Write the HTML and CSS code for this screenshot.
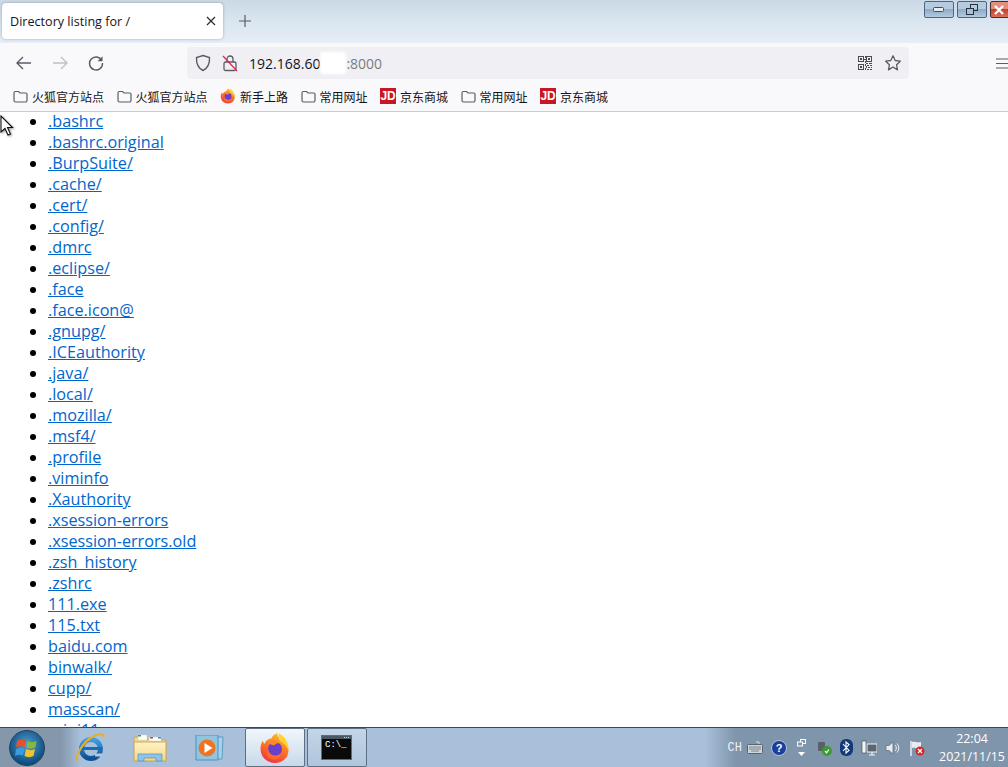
FILE: index.html
```html
<!DOCTYPE html>
<html>
<head>
    <title>Directory listing for /</title>
    <link rel="stylesheet" href="styles.css">
</head>
<body>
    <div class="browser">
        <div class="titlebar">
            <div class="tab">
                <span class="tab-title">Directory listing for /</span>
                <svg class="tab-close" width="10" height="10" viewBox="0 0 10 10"><path d="M1 1l8 8M9 1l-8 8" stroke="#2b2a33" stroke-width="1.2"/></svg>
            </div>
            <svg class="new-tab" width="14" height="14" viewBox="0 0 14 14"><path d="M7 1v12M1 7h12" stroke="#5b5b66" stroke-width="1.2"/></svg>
            <div class="win-controls">
                <div class="win-btn">
                    <svg width="12" height="6" viewBox="0 0 12 6"><rect x=".5" y=".5" width="10" height="4" rx="1" fill="#e8edf2" stroke="#3f4f63"/></svg>
                </div>
                <div class="win-btn">
                    <svg width="14" height="12" viewBox="0 0 14 12"><rect x="5.5" y=".5" width="7" height="6" fill="none" stroke="#25313f"/><rect x="1.5" y="4.5" width="7" height="6" fill="#a9c0d8" stroke="#25313f"/></svg>
                </div>
                <div class="win-btn win-close">
                    <svg class="close-x" width="12" height="10" viewBox="0 0 12 10"><path d="M2 1l8 8M10 1l-8 8" stroke="#fff" stroke-width="2.4"/></svg>
                </div>
            </div>
        </div>

        <div class="toolbar">
            <svg class="nav-icon" width="18" height="18" viewBox="0 0 18 18"><path d="M16 9H2M8 3L2 9l6 6" fill="none" stroke="#5b5b66" stroke-width="1.4"/></svg>
            <svg class="nav-icon" width="18" height="18" viewBox="0 0 18 18"><path d="M2 9h14M10 3l6 6-6 6" fill="none" stroke="#c0c0c6" stroke-width="1.4"/></svg>
            <svg class="nav-icon" width="18" height="18" viewBox="0 0 18 18"><path d="M14.8 6.5A6.5 6.5 0 1 0 15.5 9" fill="none" stroke="#5b5b66" stroke-width="1.4"/><path d="M15.5 2.2v5h-5z" fill="#5b5b66"/></svg>
            <div class="urlbar">
                <svg width="16" height="18" viewBox="0 0 16 18"><path d="M8 1.5l6.5 2c.3 6-1.5 10.500-6.500 13-5-2.500-6.800-7-6.500-13z" fill="none" stroke="#5b5b66" stroke-width="1.4"/></svg>
                <svg class="lock" width="16" height="18" viewBox="0 0 16 18"><rect x="2" y="8" width="12" height="8.5" rx="1.5" fill="none" stroke="#5b5b66" stroke-width="1.3"/><path d="M5 8V5a3 3 0 0 1 6 0v3" fill="none" stroke="#5b5b66" stroke-width="1.3"/><path d="M1 2l14 15" stroke="#e22850" stroke-width="1.3"/></svg>
                <span class="url"><span class="host">192.168.60</span><span class="blot"></span><span class="port">:8000</span></span>
                <svg class="qr" width="14" height="14" viewBox="0 0 14 14"><path fill="#4a4a55" d="M0 0h6v6H0zM1 1v4h4V1zM2 2h2v2H2zM8 0h6v6H8zM9 1v4h4V1zM10 2h2v2h-2zM0 8h6v6H0zM1 9v4h4V9zM2 10h2v2H2zM7 0h1v2H7zM6 3h2v1H6zM7 5h1v2H7zM8 7h2v1H8zM11 7h3v1h-3zM7 8h1v2H7zM9 9h2v1H9zM12 9h2v1h-2zM8 10h1v2H8zM10 11h2v1h-2zM13 11h1v1h-1zM7 12h1v2H7zM9 13h2v1H9zM12 13h2v1h-2z" fill-rule="evenodd"/></svg>
                <svg class="star" width="18" height="18" viewBox="0 0 18 18"><path d="M9 1.800l2.200 4.700 5.100.7-3.700 3.600.9 5.100L9 13l-4.500 2.900.9-5.100L1.700 7.200l5.100-.7z" fill="none" stroke="#5b5b66" stroke-width="1.3" stroke-linejoin="round"/></svg>
            </div>
            <svg class="menu" width="14" height="11" viewBox="0 0 14 11"><path d="M0 1h14M0 5.500h14M0 10h14" stroke="#5b5b66" stroke-width="1.1"/></svg>
        </div>

        <div class="bookmarks">
            <div class="bookmark"><svg width="15" height="13" viewBox="0 0 15 13"><use href="#folder"/></svg>火狐官方站点</div>
            <div class="bookmark"><svg width="15" height="13" viewBox="0 0 15 13"><use href="#folder"/></svg>火狐官方站点</div>
            <div class="bookmark"><svg width="16" height="16" viewBox="0 0 32 32"><use href="#firefox"/></svg>新手上路</div>
            <div class="bookmark"><svg width="15" height="13" viewBox="0 0 15 13"><use href="#folder"/></svg>常用网址</div>
            <div class="bookmark"><span class="jd">JD</span>京东商城</div>
            <div class="bookmark"><svg width="15" height="13" viewBox="0 0 15 13"><use href="#folder"/></svg>常用网址</div>
            <div class="bookmark"><span class="jd">JD</span>京东商城</div>
        </div>

        <div class="content">
            <svg class="cursor" width="14" height="22" viewBox="0 0 14 22"><path d="M1 1v16l4-3.500 3 6.500 2.500-1-3-6.500H12.500z" fill="#fff" stroke="#111" stroke-width="1.1"/></svg>
            <ul class="listing">
                <li><a href="#">.bashrc</a></li>
                <li><a href="#">.bashrc.original</a></li>
                <li><a href="#">.BurpSuite/</a></li>
                <li><a href="#">.cache/</a></li>
                <li><a href="#">.cert/</a></li>
                <li><a href="#">.config/</a></li>
                <li><a href="#">.dmrc</a></li>
                <li><a href="#">.eclipse/</a></li>
                <li><a href="#">.face</a></li>
                <li><a href="#">.face.icon@</a></li>
                <li><a href="#">.gnupg/</a></li>
                <li><a href="#">.ICEauthority</a></li>
                <li><a href="#">.java/</a></li>
                <li><a href="#">.local/</a></li>
                <li><a href="#">.mozilla/</a></li>
                <li><a href="#">.msf4/</a></li>
                <li><a href="#">.profile</a></li>
                <li><a href="#">.viminfo</a></li>
                <li><a href="#">.Xauthority</a></li>
                <li><a href="#">.xsession-errors</a></li>
                <li><a href="#">.xsession-errors.old</a></li>
                <li><a href="#">.zsh_history</a></li>
                <li><a href="#">.zshrc</a></li>
                <li><a href="#">111.exe</a></li>
                <li><a href="#">115.txt</a></li>
                <li><a href="#">baidu.com</a></li>
                <li><a href="#">binwalk/</a></li>
                <li><a href="#">cupp/</a></li>
                <li><a href="#">masscan/</a></li>
                <li><a href="#">mini11</a></li>
            </ul>
        </div>

        <div class="taskbar">
            <div class="start-orb">
                <svg width="24" height="22" viewBox="0 0 24 22"><path d="M2 4c3.500-2 6-2 9-.5L9.500 10C6.500 8.800 4 9 1 10.500z" fill="#e8502a"/><path d="M12.500 4c3 1.500 5.500 1.500 9 0L20.500 10.500c-3 1.500-6 1.500-9 0z" fill="#86b83c"/><path d="M1 12c3-1.500 5.500-1.700 8.500-.5L8 18.500c-3-1.200-5.500-1-8 .5z" fill="#3a9be0"/><path d="M11 12c3 1.500 6 1.500 9 0L18.500 19c-3 1.500-6 1.500-9 0z" fill="#f5c22e"/></svg>
            </div>
            <div class="task-item">
                <svg width="32" height="32" viewBox="0 0 32 32"><defs><linearGradient id="ieBlue" x1="0" y1="0" x2="0" y2="1"><stop offset="0" stop-color="#3f9fe0"/><stop offset="1" stop-color="#0e4f96"/></linearGradient></defs><circle cx="17" cy="17" r="9.500" fill="none" stroke="url(#ieBlue)" stroke-width="5"/><path d="M8 16.500h20" stroke="#1a6cb8" stroke-width="3"/><path d="M21 21.500h7v3h-7z" fill="#b5c9dc"/><path d="M4 29C0 26 8 10 20 4c6-3 10-2 10 1" fill="none" stroke="#e6ad2f" stroke-width="2"/></svg>
            </div>
            <div class="task-item">
                <svg width="34" height="28" viewBox="0 0 34 28"><defs><linearGradient id="folderFill" x1="0" y1="0" x2="0" y2="1"><stop offset="0" stop-color="#fff4c6"/><stop offset="1" stop-color="#f2d585"/></linearGradient></defs><path d="M1 3h12l2 3h18v21H1z" fill="#f2d88f" stroke="#c9a860"/><path d="M5 1h9v5H5zM16 3h12v4H16z" fill="#fff" stroke="#d8cfa8" stroke-width=".5"/><path d="M5 1h3v1.500H5z" fill="#3fa34a"/><path d="M17 3h3v1.500h-3z" fill="#c24a3a"/><path d="M25 3h3v1.500h-3z" fill="#3f8fd0"/><path d="M1 8h32v19H1z" fill="url(#folderFill)" stroke="#c9a860"/><path d="M5 20h24v7h-6v-3H11v3H5z" fill="#8fc4e8" stroke="#5a8fb8" stroke-width=".7"/></svg>
            </div>
            <div class="task-item">
                <svg width="30" height="26" viewBox="0 0 30 26"><path d="M8 2h20l-1 22H8z" fill="#a9d2ea" stroke="#5b9cc4"/><path d="M1 0h22v25H1z" fill="#92c4e0" stroke="#4b92bf"/><circle cx="12" cy="13" r="8.500" fill="#ef7422"/><path d="M9.500 8l8 5-8 5z" fill="#fff"/></svg>
            </div>
            <div class="task-item task-active">
                <svg width="32" height="32" viewBox="0 0 32 32"><use href="#firefox"/></svg>
            </div>
            <div class="task-item task-open">
                <svg width="32" height="26" viewBox="0 0 32 26"><rect x=".5" y=".5" width="30" height="24" fill="#0a0a0a" stroke="#5f6b78"/><rect x="1" y="1" width="29" height="3" fill="#4a5866"/><path d="M23 2.500h6" stroke="#d0d6dc" stroke-dasharray="1 1"/></svg>
                <span class="cmd-text">C:\_</span>
            </div>
            <div class="tray">
                <span class="lang">CH</span>
                <svg width="16" height="13" viewBox="0 0 16 13"><path d="M12 3V1H9" fill="none" stroke="#d8dde2"/><rect x=".5" y="3.500" width="15" height="9" rx="1" fill="#cfd4d9" stroke="#5a6470"/><path d="M2 6h12M2 8h12M4 10h8" stroke="#7b848e"/></svg>
                <svg width="16" height="16" viewBox="0 0 16 16"><circle cx="8" cy="8" r="7.500" fill="#1d3f9c" stroke="#b9c4d2"/><text x="8" y="12" class="help-mark">?</text></svg>
                <div class="tray-up">
                    <svg width="9" height="8" viewBox="0 0 9 8"><rect x="3.500" y=".5" width="5" height="4" fill="none" stroke="#fff"/><rect x=".5" y="3" width="5" height="4" fill="#8496a8" stroke="#fff"/></svg>
                    <svg width="7" height="4" viewBox="0 0 7 4"><path d="M0 0h7L3.500 4z" fill="#fff"/></svg>
                </div>
                <svg width="16" height="17" viewBox="0 0 16 17"><rect x="2" y="3" width="7" height="9" rx="1" fill="#5a6068"/><path d="M3 0v3M7 0v3M5.500 12v5" stroke="#8a8f96" stroke-width="1.5"/><circle cx="11" cy="12" r="5" fill="#3b9a35"/><path d="M9 12l1.500 1.800 2.500-3.300" fill="none" stroke="#fff" stroke-width="1.2"/></svg>
                <svg width="13" height="17" viewBox="0 0 13 17"><rect width="13" height="17" rx="6" fill="#123a78"/><path d="M3 5l6 6.500-3 2.500V3l3 2.500L3 12" fill="none" stroke="#fff" stroke-width="1.1"/></svg>
                <svg width="16" height="16" viewBox="0 0 16 16"><rect x="6" y="4" width="10" height="8" fill="#5c6670" stroke="#f2f4f6"/><path d="M11 12v3M8 15h6" stroke="#f2f4f6" stroke-width="1.2"/><rect x="1" y="1" width="4" height="12" fill="#f2f4f6" stroke="#3a434d" stroke-width=".6"/></svg>
                <svg width="16" height="14" viewBox="0 0 16 14"><path d="M1 4.500h3L8 1v12L4 9.500H1z" fill="#e8ecf0" stroke="#5a6470" stroke-width=".7"/><path d="M10 4a4 4 0 0 1 0 6M12 2.500a6.500 6.500 0 0 1 0 9" fill="none" stroke="#e8ecf0"/></svg>
                <svg width="16" height="16" viewBox="0 0 16 16"><path d="M2 1v15" stroke="#f2f4f6" stroke-width="1.4"/><path d="M3 2c3-1 4 1 9 0v6c-5 1-6-1-9 0z" fill="#e9edf1"/><circle cx="11" cy="11" r="4.500" fill="#cf2a2a"/><path d="M9 9l4 4M13 9l-4 4" stroke="#fff" stroke-width="1.2"/></svg>
            </div>
            <div class="clock">
                <div>22:04</div>
                <div>2021/11/15</div>
            </div>
        </div>
    </div>

    <svg class="defs" width="0" height="0">
        <defs>
            <g id="folder">
                <path d="M1 3a1.500 1.500 0 0 1 1.500-1.500h3L7 3h5.500A1.500 1.500 0 0 1 14 4.500v6a1.500 1.500 0 0 1-1.500 1.500h-10A1.500 1.500 0 0 1 1 10.500z" fill="none" stroke="#5b5b66" stroke-width="1.2"/>
            </g>
            <linearGradient id="fxOuter" x1="0.7" y1="0" x2="0.3" y2="1"><stop offset="0" stop-color="#ffc02e"/><stop offset=".45" stop-color="#ff7a1f"/><stop offset="1" stop-color="#f0324a"/></linearGradient>
            <g id="firefox">
                <path d="M16 31C7.500 31 1.500 24.500 1.500 17c0-3.500 1-6.500 2.500-8.500 0 1.500.5 2.500 1.500 3.500C7 8 10 6.500 12.500 6.500 13 4 15.500 2 18.500 1c-.5 2.500.5 4 3 5.500 4 2.500 8 6 8 11.500C29.500 25.500 24 31 16 31z" fill="url(#fxOuter)"/>
                <path d="M20 1.500c6 3 10 9 9.500 17-1.500-4-4-7-8-9-2-1.500-2.500-4.500-1.500-8z" fill="#ffd23c"/>
                <circle cx="16" cy="17" r="7" fill="#6b3fc9"/>
                <path d="M10 11c3-2.500 8-2 10 0-2 0-4 1-4.500 2.500-2-.5-4-1-5.500-2.500z" fill="#ff8a2a"/>
                <path d="M9 17c1 5 5 7 9 6.500 3-.5 5-2.500 5.500-5 .5 5-3.500 9-8.500 9-4 0-7-2.500-7-6 0-1.500.5-3 1-4.500z" fill="#ff6a26"/>
            </g>
        </defs>
    </svg>
</body>
</html>
```

FILE: styles.css
```css
html, body {
    margin: 0;
    height: 100%;
    overflow: hidden;
}

body {
    font-family: "Open Sans", "Noto Sans CJK SC", sans-serif;
}

.defs {
    display: block;
    height: 0;
}

.browser {
    display: flex;
    flex-direction: column;
    width: 1008px;
    height: 767px;
    overflow: hidden;
}

/* title bar */
.titlebar {
    display: flex;
    align-items: flex-start;
    height: 43px;
    flex: none;
    background: linear-gradient(#cbd9e6, #dbe6f0 55%, #e6eef7);
    box-sizing: border-box;
    padding: 3px 0 0 2px;
}

.tab {
    display: flex;
    align-items: center;
    justify-content: space-between;
    box-sizing: border-box;
    width: 221px;
    height: 36px;
    padding: 0 7px 0 8px;
    background: #fff;
    border-radius: 4px;
    box-shadow: 0 0 3px rgba(0, 0, 0, 0.3);
}

.tab-title {
    font-size: 12.6px;
    color: #15141a;
}

.new-tab {
    margin: 11px 0 0 15px;
}

.win-controls {
    display: flex;
    gap: 3px;
    margin: -2px -30px 0 auto;
}

.win-btn {
    display: flex;
    flex: none;
    align-items: center;
    justify-content: center;
    width: 28px;
    height: 15px;
    border: 1px solid #4f6580;
    border-radius: 2px;
    background: linear-gradient(#b5cbe0 45%, #8fabc8 50%, #b4c9dd);
}

.win-close {
    justify-content: flex-start;
    width: 44px;
    padding-left: 2px;
    border-color: #4d2a2a;
    background: linear-gradient(#e58e7e 45%, #c7402a 50%, #d9705e);
}

/* toolbar */
.toolbar {
    display: flex;
    align-items: center;
    height: 40px;
    flex: none;
    background: #f9f9fb;
    padding: 0 3px 0 15px;
    box-sizing: border-box;
}

.nav-icon {
    margin-right: 18px;
}

.nav-icon:nth-child(3) {
    margin-right: 0;
}

.urlbar {
    display: flex;
    align-items: center;
    box-sizing: border-box;
    width: 722px;
    height: 32px;
    margin-left: 82px;
    padding: 0 7px 0 8px;
    background: #f0f0f4;
    border-radius: 4px;
}

.lock {
    margin-left: 11px;
}

.url {
    display: flex;
    align-items: center;
    margin-left: 11px;
    font-size: 14px;
}

.host {
    color: #15141a;
}

.blot {
    width: 26px;
    height: 22px;
    background: #fff;
    border-radius: 3px;
    filter: blur(1px);
}

.port {
    color: #7c7c85;
}

.qr {
    margin-left: auto;
}

.star {
    margin-left: 12px;
}

.menu {
    margin-left: auto;
    margin-right: -5px;
}

/* bookmarks */
.bookmarks {
    display: flex;
    align-items: center;
    gap: 12.5px;
    height: 29px;
    flex: none;
    box-sizing: border-box;
    padding: 0 0 2px 13px;
    background: #f9f9fb;
    border-bottom: 1px solid #ccc;
}

.bookmark {
    display: flex;
    align-items: center;
    gap: 4px;
    font-size: 12px;
    color: #15141a;
    font-family: "Noto Sans CJK SC", sans-serif;
}

.jd {
    display: inline-block;
    width: 16px;
    height: 16px;
    text-align: center;
    font: bold 12px/16px "Liberation Sans", sans-serif;
    color: #fff;
    background: #c91623;
}

/* page content */
.content {
    position: relative;
    flex: 1;
    min-height: 0;
    overflow: hidden;
    background: #fff;
}

.cursor {
    position: absolute;
    top: 3px;
    left: 0;
    filter: drop-shadow(1px 1px 1px rgba(0, 0, 0, 0.4));
}

.listing {
    margin: 0;
    padding: 0 0 0 48px;
    font-size: 16.2px;
    line-height: 19px;
}

.listing li {
    margin-bottom: 2px;
}

.listing a {
    display: inline-block;
    height: 19px;
    color: #0066cc;
}

/* taskbar */
.taskbar {
    display: flex;
    align-items: center;
    position: relative;
    height: 40px;
    flex: none;
    box-sizing: border-box;
    border-top: 1px solid #3a4656;
    background: linear-gradient(90deg, #8497ab, #8497ab 6%, #a8c0da 8%, #a8c0da 70%, #7f95ab 73%, #7f95ab);
}

.start-orb {
    display: flex;
    align-items: center;
    justify-content: center;
    width: 36px;
    height: 36px;
    margin-left: 9px;
    border-radius: 50%;
    border: 1px solid #22415f;
    box-sizing: border-box;
    background: radial-gradient(circle at 50% 40%, #4f9fd0, #0f4f80 70%, #0a3558);
}

.task-item {
    display: flex;
    align-items: center;
    justify-content: center;
    position: relative;
    box-sizing: border-box;
    width: 60px;
    height: 39px;
}

.task-item:nth-child(2) {
    margin-left: 15px;
}

.task-active {
    background: linear-gradient(#f2f6fb, #c8d9ea);
    border: 1px solid #5d6f83;
    border-radius: 2px;
    margin-left: 5px;
}

.task-open {
    background: linear-gradient(#c3d5e7, #b0c6dc);
    border: 1px solid #5d6f83;
    border-radius: 2px;
    margin-left: 2px;
}

.cmd-text {
    position: absolute;
    left: 17px;
    top: 11px;
    font: 9px "Liberation Mono", monospace;
    color: #fff;
}

.tray {
    display: flex;
    align-items: center;
    gap: 8px;
    margin-left: auto;
    color: #fff;
}

.lang {
    margin-right: -3px;
    font: 12px "Liberation Mono", monospace;
    color: #eef2f6;
}

.help-mark {
    font: bold 11px "Liberation Sans", sans-serif;
    fill: #fff;
    text-anchor: middle;
}

.tray-up {
    display: flex;
    flex-direction: column;
    align-items: center;
    gap: 5px;
    margin: 0 2px;
}

.clock {
    width: 70px;
    margin-left: 12px;
    margin-right: 1px;
    font-size: 12.4px;
    line-height: 18px;
    text-align: center;
    color: #fff;
}
```
